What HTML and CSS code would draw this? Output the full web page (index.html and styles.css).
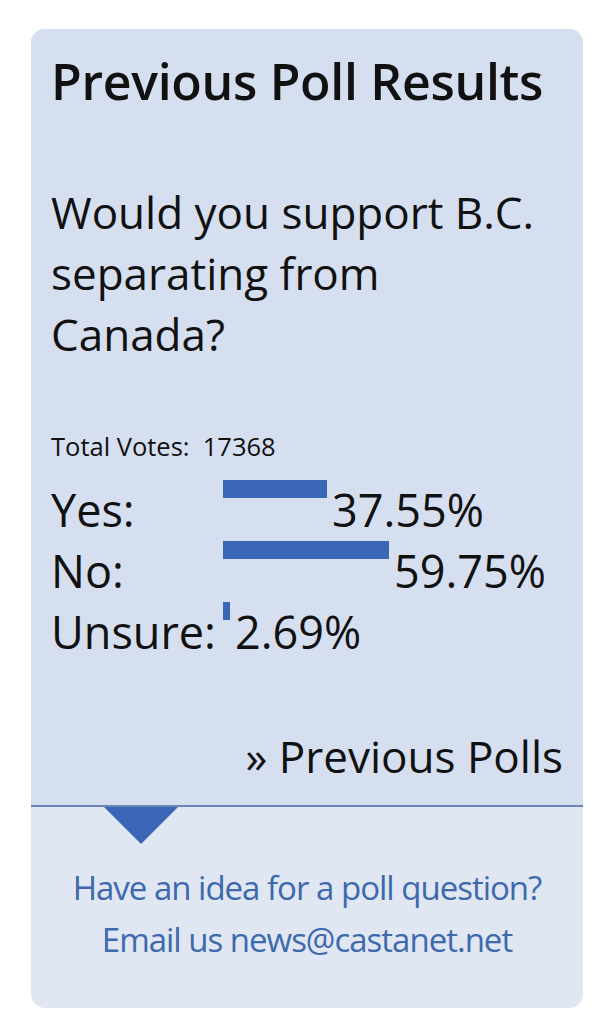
FILE: index.html
```html
<!DOCTYPE html>
<html>
<head>
<meta charset="utf-8">
<link rel="stylesheet" href="styles.css">
</head>
<body>
<div class="card">
  <div class="card-top">
    <h2 class="title">Previous Poll Results</h2>
    <p class="question">Would you support B.C. separating from Canada?</p>
    <div class="total">Total Votes:&nbsp; 17368</div>
    <table class="results">
      <tr><td class="label">Yes:</td><td class="value"><span class="bar" style="width:104px"></span>37.55%</td></tr>
      <tr><td class="label">No:</td><td class="value"><span class="bar" style="width:166px"></span>59.75%</td></tr>
      <tr><td class="label">Unsure:</td><td class="value"><span class="bar" style="width:7px"></span>2.69%</td></tr>
    </table>
    <div class="more"><a href="#">» Previous Polls</a></div>
  </div>
  <div class="card-bottom">
    <div class="pointer"></div>
    <p class="idea">Have an idea for a poll question?<br>Email us news@castanet.net</p>
  </div>
</div>
</body>
</html>
```
FILE: styles.css
```css
html, body {
  margin: 0;
  padding: 0;
  background: #ffffff;
}
body {
  font-family: "Open Sans", "Noto Sans", sans-serif;
  color: #111111;
}
.card {
  margin: 29px 19px 16px 31px;
  width: 552px;
  height: 979px;
  border-radius: 14px;
  overflow: hidden;
  background: #e0e6f2;
  display: flex;
  flex-direction: column;
}
.card-top {
  background: #d5dff0;
  padding: 20px 20px 0 20px;
  border-bottom: 2px solid #6a84b3;
}
.title {
  margin: 0;
  font-size: 50px;
  font-weight: 600;
  line-height: 64px;
  letter-spacing: -0.3px;
}
.question {
  margin: 69px 0 0 0;
  max-width: 490px;
  font-size: 44px;
  line-height: 61px;
}
.total {
  margin-top: 66px;
  font-size: 25.5px;
  line-height: 30px;
}
.results {
  border-collapse: collapse;
  margin-top: 18px;
}
.results td {
  padding: 0;
  font-size: 45px;
  line-height: 61px;
  white-space: nowrap;
}
.results .label {
  width: 172px;
}
.bar {
  display: inline-block;
  height: 18px;
  background: #3a66b6;
  vertical-align: top;
  margin-top: 1px;
  margin-right: 5px;
}
.more {
  text-align: right;
  margin-top: 64px;
  padding-bottom: 18px;
  font-size: 44px;
  line-height: 61px;
}
.more a {
  color: #111111;
  text-decoration: none;
}
.card-bottom {
  flex: 1;
}
.pointer {
  width: 0;
  height: 0;
  margin-left: 73px;
  border-top: 37px solid #3a66b6;
  border-left: 37px solid transparent;
  border-right: 37px solid transparent;
}
.idea {
  margin: 18px 0 0 0;
  text-align: center;
  color: #3d69ad;
  font-size: 33px;
  line-height: 52px;
  letter-spacing: -1px;
}
```
